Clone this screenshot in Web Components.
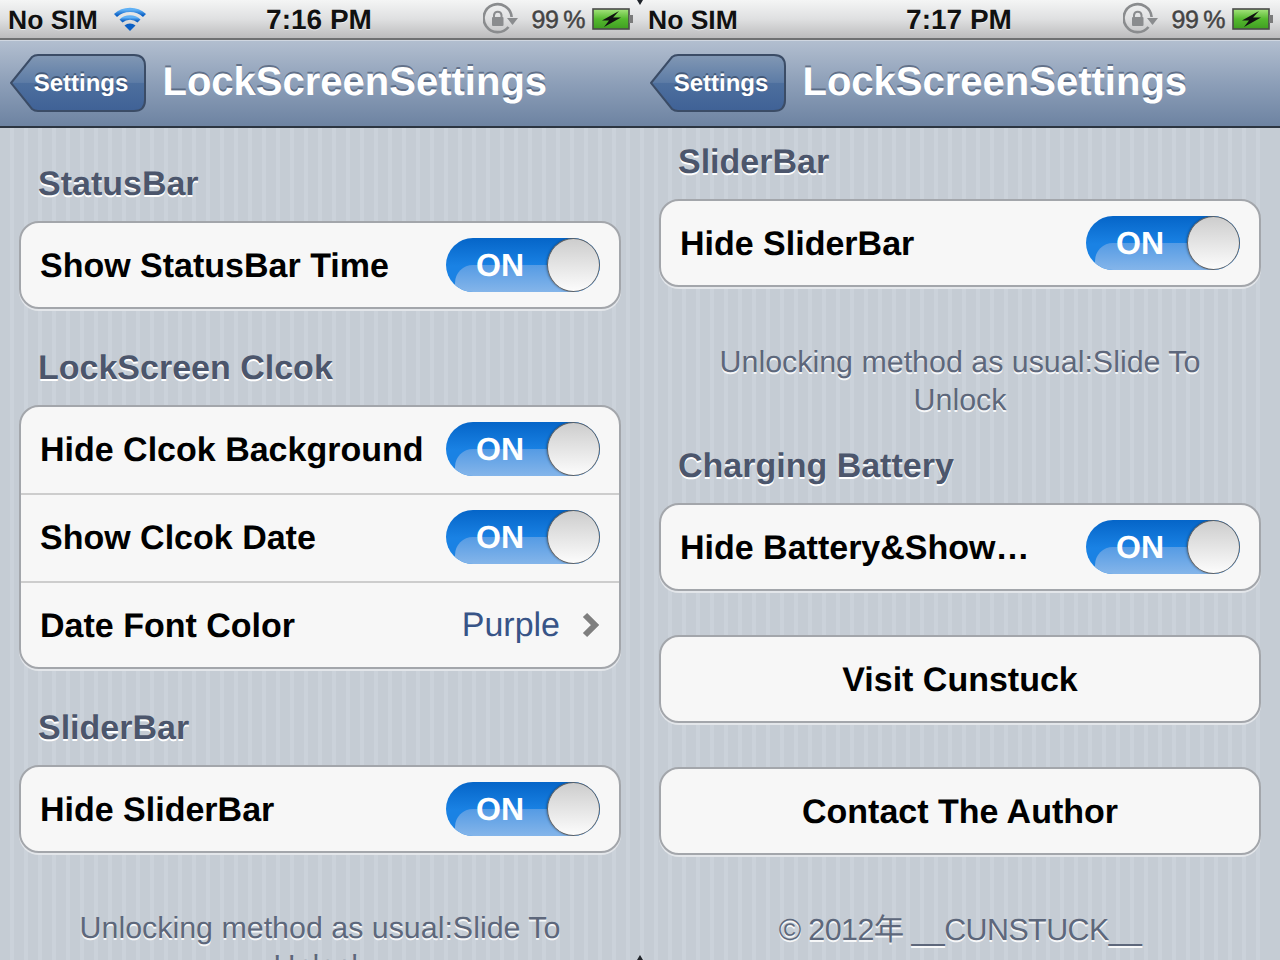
<!DOCTYPE html>
<html>
<head>
<meta charset="utf-8">
<title>LockScreenSettings</title>
<style>
  html, body { margin: 0; padding: 0; background: #c5ccd4; }
  body { width: 1280px; height: 960px; overflow: hidden; display: flex; font-family: "Liberation Sans", Arial, sans-serif; position: relative; text-rendering: geometricPrecision; }
  .tick { position: absolute; left: 635px; width: 10px; height: 5px; background: #20242a; }
  .tick.top { top: 0; clip-path: polygon(20% 0, 80% 0, 50% 100%); }
  .tick.bottom { top: 955px; clip-path: polygon(50% 0, 80% 100%, 20% 100%); }
</style>
</head>
<body>

<ios-phone time="7:16 PM" wifi top="37" stripe="0">
  <ios-section title="StatusBar">
    <ios-group>
      <ios-row>Show StatusBar Time<ios-switch slot="accessory"></ios-switch></ios-row>
    </ios-group>
  </ios-section>
  <ios-section title="LockScreen Clcok">
    <ios-group>
      <ios-row>Hide Clcok Background<ios-switch slot="accessory"></ios-switch></ios-row>
      <ios-row>Show Clcok Date<ios-switch slot="accessory"></ios-switch></ios-row>
      <ios-row>Date Font Color<ios-value slot="accessory">Purple</ios-value></ios-row>
    </ios-group>
  </ios-section>
  <ios-section title="SliderBar">
    <ios-group>
      <ios-row>Hide SliderBar<ios-switch slot="accessory"></ios-switch></ios-row>
    </ios-group>
    <ios-footer>Unlocking method as usual:Slide To<br>Unlock</ios-footer>
  </ios-section>
</ios-phone>

<ios-phone time="7:17 PM" top="15" stripe="-10">
  <ios-section title="SliderBar" class="short">
    <ios-group>
      <ios-row>Hide SliderBar<ios-switch slot="accessory"></ios-switch></ios-row>
    </ios-group>
    <ios-footer>Unlocking method as usual:Slide To<br>Unlock</ios-footer>
  </ios-section>
  <ios-section title="Charging Battery" class="tight">
    <ios-group>
      <ios-row>Hide Battery&amp;Show…<ios-switch slot="accessory"></ios-switch></ios-row>
    </ios-group>
  </ios-section>
  <ios-section plain>
    <ios-group><ios-row center>Visit Cunstuck</ios-row></ios-group>
  </ios-section>
  <ios-section plain>
    <ios-group><ios-row center>Contact The Author</ios-row></ios-group>
    <ios-footer style="letter-spacing:-.55px">© 2012年 __CUNSTUCK__</ios-footer>
  </ios-section>
</ios-phone>

<div class="tick top"></div>
<div class="tick bottom"></div>

<script>
class IosStatus extends HTMLElement {
  connectedCallback() {
    const wifi = this.hasAttribute("wifi") ? `
      <svg class="wifi" width="34" height="26" viewBox="0 0 34 26">
        <defs><linearGradient id="w" x1="0" y1="0" x2="0" y2="1">
          <stop offset="0" stop-color="#5fb0f5"/><stop offset="1" stop-color="#0a5fc4"/>
        </linearGradient></defs>
        <g fill="none" stroke="url(#w)" stroke-width="4.4">
          <path d="M2.5 9.5C10.5 2 23.5 2 31.5 9.5"/>
          <path d="M8 15C13 10.4 21 10.4 26 15"/>
        </g>
        <path d="M17 25 11.5 19.6C14.4 16.9 19.6 16.9 22.5 19.6Z" fill="#0a5fc4"/>
      </svg>` : "";
    this.attachShadow({ mode: "open" }).innerHTML = `
      <style>
        :host {
          display: grid; grid-template-columns: 1fr auto 1fr; align-items: center;
          height: 38px; padding: 0 6px 0 8px;
          background: linear-gradient(#f4f5f5 0%, #dfe0e1 50%, #bcbcbd 100%);
          border-bottom: 2px solid #6f7172;
          font: bold 28px "Liberation Sans", Arial, sans-serif; color: #111;
          text-shadow: 0 1px 0 rgba(255,255,255,.7);
        }
        .left { display: flex; align-items: center; gap: 15px; font-size: 26.5px; }
        .left span, .time, .pct { padding-top: 2px; }
        .time { margin-left: -4px; }
        .right { display: flex; align-items: center; justify-content: flex-end; gap: 7px; color: #444; font-size: 25px; font-weight: normal; -webkit-text-stroke: .5px #444; }
        .pct { margin-left: 6px; letter-spacing: -.4px; word-spacing: -2px; }
      </style>
      <div class="left"><span>No SIM</span>${wifi}</div>
      <div class="time">${this.getAttribute("time")}</div>
      <div class="right">
        <svg width="36" height="34" viewBox="0 0 36 34">
          <path d="M25.5 25A14 14 0 1 1 28.600 15" fill="none" stroke="#8a8c8e" stroke-width="2.6"/>
          <path d="M24 16H35L29.500 23Z" fill="#8a8c8e"/>
          <rect x="9" y="15" width="11.500" height="9" rx="1" fill="#8a8c8e"/>
          <path d="M11 15V13a3.800 3.800 0 0 1 7.500 0V15" fill="none" stroke="#8a8c8e" stroke-width="2"/>
        </svg>
        <span class="pct">99 %</span>
        <svg width="42" height="22" viewBox="0 0 42 22">
          <defs><linearGradient id="b" x1="0" y1="0" x2="0" y2="1">
            <stop offset="0" stop-color="#a6e57e"/><stop offset=".5" stop-color="#55b92f"/><stop offset="1" stop-color="#3f9e21"/>
          </linearGradient></defs>
          <rect x="1" y="1" width="36" height="20" fill="url(#b)" stroke="#4a4a4a" stroke-width="1.6"/>
          <rect x="37" y="7" width="4" height="8" fill="#7a7a7a"/>
          <path d="M27 3 10 12.500H17L12 19 29 9.500H21Z" fill="#111"/>
        </svg>
      </div>`;
  }
}
customElements.define("ios-status", IosStatus);

class IosNav extends HTMLElement {
  connectedCallback() {
    this.attachShadow({ mode: "open" }).innerHTML = `
      <style>
        :host {
          display: flex; align-items: center; gap: 16px; box-sizing: border-box;
          height: 88px; padding: 0 0 0 10px;
          background: linear-gradient(#b3bfd0 0%, #8d9fb8 50%, #6d83a2 100%);
          border-bottom: 2px solid #2c3541;
          box-shadow: inset 0 1px 0 #d0d7e1;
          font-family: "Liberation Sans", Arial, sans-serif; color: #fff;
        }
        .back {
          position: relative; width: 136px; height: 58px;
          display: flex; align-items: center; justify-content: center;
          padding-left: 6px; box-sizing: border-box;
          font-size: 24px; font-weight: bold; text-shadow: 0 -2px 0 rgba(40,55,80,.55);
        }
        .back svg { position: absolute; left: 0; top: 0; }
        .back span { position: relative; padding-top: 2px; }
        .title { font-size: 40px; font-weight: bold; margin-top: -2px; margin-left: .5px; text-shadow: 0 -2px 0 rgba(50,65,90,.55); }
      </style>
      <div class="back">
        <svg width="136" height="58" viewBox="0 0 136 58">
          <defs><linearGradient id="n" x1="0" y1="0" x2="0" y2="1">
            <stop offset="0" stop-color="#8298b4"/><stop offset=".49" stop-color="#5d7ca6"/>
            <stop offset=".5" stop-color="#4d6f9e"/><stop offset="1" stop-color="#3f6196"/>
          </linearGradient></defs>
          <path d="M1 29 22 3Q24.500 1 28 1H124Q135 1 135 12V46Q135 57 124 57H28Q24.500 57 22 55Z" fill="url(#n)" stroke="#3b4c66" stroke-width="2"/>
        </svg>
        <span>Settings</span>
      </div>
      <div class="title">LockScreenSettings</div>`;
  }
}
customElements.define("ios-nav", IosNav);

class IosPhone extends HTMLElement {
  connectedCallback() {
    const top = this.getAttribute("top");
    const wifi = this.hasAttribute("wifi") ? "wifi" : "";
    this.attachShadow({ mode: "open" }).innerHTML = `
      <style>
        :host {
          display: block; width: 640px; height: 960px; overflow: hidden; flex: none;
          background: repeating-linear-gradient(90deg, #c5ccd4 0 10px, #cbd2da 10px 14px);
          background-position: ${this.getAttribute("stripe")}px 0;
        }
        .scroll { padding-top: ${top}px; }
      </style>
      <ios-status time="${this.getAttribute("time")}" ${wifi}></ios-status>
      <ios-nav></ios-nav>
      <div class="scroll"><slot></slot></div>`;
  }
}
customElements.define("ios-phone", IosPhone);

class IosSection extends HTMLElement {
  connectedCallback() {
    const title = this.getAttribute("title");
    this.attachShadow({ mode: "open" }).innerHTML = `
      <style>
        :host { display: block; margin-bottom: 40px; }
        :host(.short) { margin-bottom: 29px; }
        :host(.tight), :host([plain]) { margin-bottom: 44px; }
        .head {
          height: 36px; margin: 0 0 20px 38px;
          font: bold 34px/38px "Liberation Sans", Arial, sans-serif; color: #4c566c;
          text-shadow: 0 2px 0 #fff;
        }
      </style>
      ${title ? `<div class="head">${title}</div>` : ""}
      <slot></slot>`;
  }
}
customElements.define("ios-section", IosSection);

class IosGroup extends HTMLElement {
  connectedCallback() {
    this.attachShadow({ mode: "open" }).innerHTML = `
      <style>
        :host {
          display: block; box-sizing: border-box; width: 602px; margin-left: 19px;
          background: #f7f7f7; border: 2px solid #a3a6ab; border-radius: 20px;
          box-shadow: 0 2px 0 #e3e6ea;
          overflow: hidden;
        }
      </style>
      <slot></slot>`;
  }
}
customElements.define("ios-group", IosGroup);

class IosRow extends HTMLElement {
  connectedCallback() {
    this.attachShadow({ mode: "open" }).innerHTML = `
      <style>
        :host {
          display: flex; align-items: center; justify-content: space-between;
          box-sizing: border-box; height: 84px; padding: 0 19px;
          font: bold 34px "Liberation Sans", Arial, sans-serif; color: #000;
        }
        :host(:not(:last-child)) { height: 88px; border-bottom: 2px solid #cdcdcd; padding-bottom: 2px; }
        :host([center]) { justify-content: center; }
        .text { padding-top: 2px; }
      </style>
      <span class="text"><slot></slot></span>
      <slot name="accessory"></slot>`;
  }
}
customElements.define("ios-row", IosRow);

class IosSwitch extends HTMLElement {
  connectedCallback() {
    this.attachShadow({ mode: "open" }).innerHTML = `
      <style>
        :host {
          display: block; position: relative; box-sizing: border-box; width: 154px; height: 54px;
          border-radius: 27px; overflow: hidden;
          background: linear-gradient(#0565c8 0%, #1a82e4 52%, #1a82e4 100%);
          font: bold 32px/54px "Liberation Sans", Arial, sans-serif; color: #fff;
        }
        .gloss {
          position: absolute; left: 9px; top: 27px; width: 170px; height: 40px; border-radius: 18px 0 0 0;
          background: linear-gradient(#559be4, #86b6ea 70%);
        }
        .label { position: relative; display: block; width: 108px; text-align: center; }
        .knob {
          position: absolute; right: 0; top: 0; box-sizing: border-box; width: 53px; height: 54px;
          border-radius: 50%; border: 1.5px solid #5e6062;
          background: linear-gradient(#cdcdcd, #fcfcfc);
          box-shadow: -1px 0 2px rgba(0,0,0,.25);
        }
      </style>
      <div class="gloss"></div>
      <span class="label">ON</span>
      <div class="knob"></div>`;
  }
}
customElements.define("ios-switch", IosSwitch);

class IosValue extends HTMLElement {
  connectedCallback() {
    this.attachShadow({ mode: "open" }).innerHTML = `
      <style>
        :host {
          display: flex; align-items: center; gap: 22px;
          font: normal 34px "Liberation Sans", Arial, sans-serif; color: #385487;
        }
      </style>
      <slot></slot>
      <svg width="18" height="26" viewBox="0 0 18 26">
        <path d="M3 3 13 13 3 23" fill="none" stroke="#7f7f7f" stroke-width="6"/>
      </svg>`;
  }
}
customElements.define("ios-value", IosValue);

class IosFooter extends HTMLElement {
  connectedCallback() {
    this.attachShadow({ mode: "open" }).innerHTML = `
      <style>
        :host {
          display: block; margin: 56px 0 -1px; text-align: center;
          font: normal 30.4px/38px "Liberation Sans", "Noto Sans CJK SC", Arial, sans-serif; color: #4c566c;
          text-shadow: 0 2px 0 #fff; opacity: .85;
        }
      </style>
      <slot></slot>`;
  }
}
customElements.define("ios-footer", IosFooter);
</script>
</body>
</html>
